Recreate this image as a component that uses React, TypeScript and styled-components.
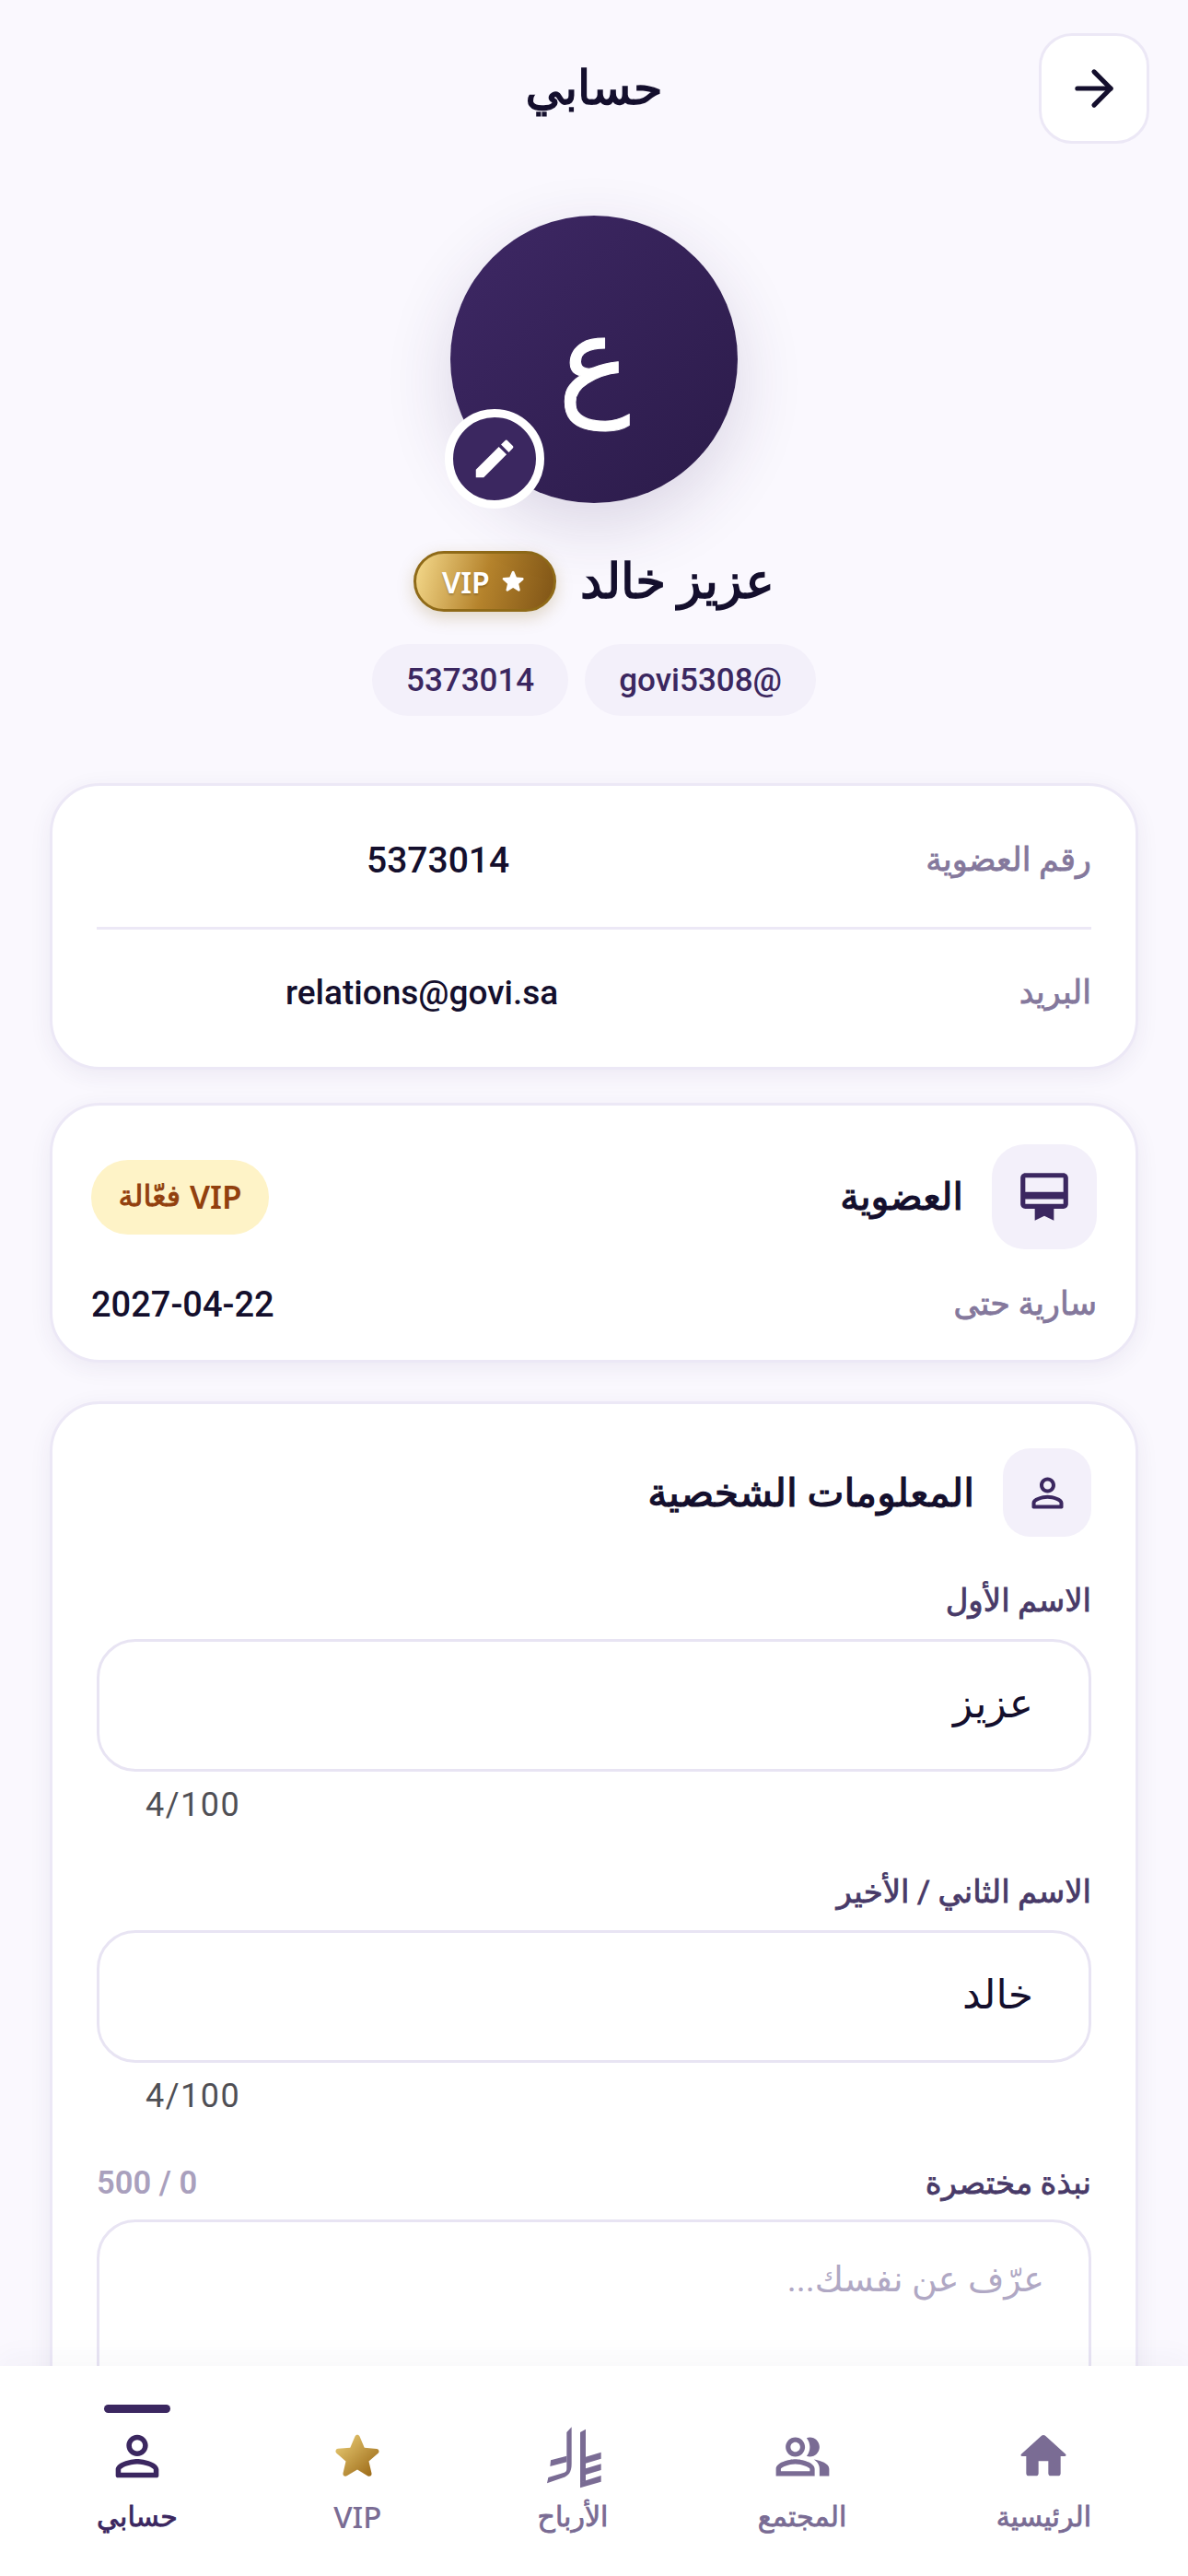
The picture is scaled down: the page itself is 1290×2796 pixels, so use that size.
import React from 'react'
import styled, { createGlobalStyle } from 'styled-components'
import { ArrowRight } from 'lucide-react'

const GlobalStyle = createGlobalStyle`
   html, body {
      margin: 0;
      padding: 0;
      background: #faf8fe;
   }
   body {
      font-family: Roboto, "DejaVu Sans", sans-serif;
      color: #140f2d;
   }
`

const PersonIcon = ({ size, color }: { size: number; color: string }) => (
   <svg width={size} height={size} viewBox="0 0 24 24" fill={color}>
      <path d="M12 5.9a2.1 2.1 0 1 1 0 4.2 2.1 2.1 0 0 1 0-4.2m0 9c2.97 0 6.1 1.46 6.1 2.1v1.1H5.9V17c0-.64 3.13-2.1 6.1-2.1M12 4C9.79 4 8 5.79 8 8s1.79 4 4 4 4-1.79 4-4-1.79-4-4-4zm0 9c-2.67 0-8 1.34-8 4v2.2c0 .44.36.8.8.8h14.4c.44 0 .8-.36.8-.8V17c0-2.66-5.33-4-8-4z" />
   </svg>
)

const App = () => {
   return (
      <Screen dir="rtl">
         <GlobalStyle />
         <Header>
            <BackButton>
               <ArrowRight size={62} strokeWidth={2} color="#140f2d" />
            </BackButton>
            <PageTitle>حسابي</PageTitle>
         </Header>

         <Profile>
            <Avatar>
               ع
               <EditBadge>
                  <svg width="54" height="54" viewBox="0 0 24 24" fill="#fff">
                     <path d="M3 17.25V21h3.75L17.81 9.94l-3.75-3.75L3 17.25zM20.71 7.04a1 1 0 0 0 0-1.41l-2.34-2.34a1 1 0 0 0-1.41 0l-1.83 1.83 3.75 3.75 1.83-1.83z" />
                  </svg>
               </EditBadge>
            </Avatar>
            <NameRow>
               <Name>عزيز خالد</Name>
               <VipPill>
                  <svg width="36" height="36" viewBox="0 0 24 24" fill="#fff">
                     <path d="M12 17.27l4.15 2.51c.76.46 1.69-.22 1.49-1.08l-1.1-4.72 3.67-3.18c.67-.58.31-1.68-.57-1.75l-4.83-.41-1.89-4.46c-.34-.81-1.5-.81-1.84 0L9.19 8.63l-4.83.41c-.88.07-1.24 1.17-.57 1.75l3.67 3.18-1.1 4.72c-.2.86.73 1.54 1.49 1.08l4.15-2.5z" />
                  </svg>
                  VIP
               </VipPill>
            </NameRow>
            <Chips>
               <Chip>@govi5308</Chip>
               <Chip>5373014</Chip>
            </Chips>
         </Profile>

         <Cards>
            <InfoCard>
               <InfoRow $first>
                  <InfoLabel>رقم العضوية</InfoLabel>
                  <InfoValue $inset={293} $size={39}>5373014</InfoValue>
               </InfoRow>
               <InfoRow>
                  <InfoLabel>البريد</InfoLabel>
                  <InfoValue $inset={205} $size={37}>relations@govi.sa</InfoValue>
               </InfoRow>
            </InfoCard>

            <MemberCard>
               <MemberTop>
                  <MemberIcon>
                     <svg width="62" height="62" viewBox="0 0 24 24" fill="#3b2760">
                        <path d="M20 2H4c-1.1 0-2 .9-2 2v11c0 1.1.9 2 2 2h4v5l4-2 4 2v-5h4c1.1 0 2-.9 2-2V4c0-1.1-.9-2-2-2zm0 13H4v-2h16v2zm0-5H4V4h16v6z" />
                     </svg>
                  </MemberIcon>
                  <MemberTitle>العضوية</MemberTitle>
                  <ActiveTag>
                     <TagLatin>VIP</TagLatin> فعّالة
                  </ActiveTag>
               </MemberTop>
               <MemberBottom>
                  <InfoLabel>سارية حتى</InfoLabel>
                  <DateValue>2027-04-22</DateValue>
               </MemberBottom>
            </MemberCard>

            <FormCard>
               <SectionHead>
                  <SectionIcon>
                     <PersonIcon size={51} color="#3b2760" />
                  </SectionIcon>
                  <SectionTitle>المعلومات الشخصية</SectionTitle>
               </SectionHead>

               <Field>
                  <FieldLabel>الاسم الأول</FieldLabel>
                  <TextBox value="عزيز" readOnly />
                  <Counter>4/100</Counter>
               </Field>
               <Field>
                  <FieldLabel>الاسم الثاني / الأخير</FieldLabel>
                  <TextBox value="خالد" readOnly />
                  <Counter>4/100</Counter>
               </Field>
               <Field>
                  <BioHead>
                     <FieldLabel>نبذة مختصرة</FieldLabel>
                     <BioCount>0 / 500</BioCount>
                  </BioHead>
                  <BioBox placeholder="عرّف عن نفسك..." readOnly />
               </Field>
            </FormCard>
         </Cards>

         <BottomNav>
            <NavItem>
               <NavIcon>
                  <svg width="64" height="64" viewBox="0 0 24 24" fill="#7a6c94">
                     <path d="M10 19v-5h4v5c0 .55.45 1 1 1h3c.55 0 1-.45 1-1v-7h1.7c.46 0 .68-.57.33-.87L12.67 3.6c-.38-.34-.96-.34-1.34 0l-8.36 7.53c-.34.3-.13.87.33.87H5v7c0 .55.45 1 1 1h3c.55 0 1-.45 1-1z" />
                  </svg>
               </NavIcon>
               <NavLabel>الرئيسية</NavLabel>
            </NavItem>
            <NavItem>
               <NavIcon>
                  <svg width="63" height="63" viewBox="0 0 24 24" fill="#7a6c94">
                     <path d="M16.67 13.13C18.04 14.06 19 15.32 19 17v3h4v-3c0-2.18-3.57-3.47-6.33-3.87z" />
                     <path d="M15 12c2.21 0 4-1.79 4-4s-1.79-4-4-4c-.47 0-.91.1-1.33.24C14.5 5.27 15 6.58 15 8s-.5 2.73-1.33 3.76c.42.14.86.24 1.33.24z" />
                     <path d="M9 12c2.21 0 4-1.79 4-4s-1.79-4-4-4-4 1.79-4 4 1.79 4 4 4zm0-6c1.1 0 2 .9 2 2s-.9 2-2 2-2-.9-2-2 .9-2 2-2z" />
                     <path d="M9 13c-2.67 0-8 1.34-8 4v3h16v-3c0-2.66-5.33-4-8-4zm6 5H3v-.99C3.2 16.29 6.3 15 9 15s5.8 1.29 6 2v1z" />
                  </svg>
               </NavIcon>
               <NavLabel>المجتمع</NavLabel>
            </NavItem>
            <NavItem>
               <NavIcon>
                  <RiyalIcon width="80" height="80" viewBox="0 0 240 240" fill="#7a6c94">
                     <path d="M100 42 116 25V145C116 172 106 184 88 190L36 208 40 189 92 173C98 171 100 168 100 160zM144 42 162 32V200L144 206z" />
                     <path d="M48 133 100 119V139L46 153zM162 122 212 107V128L162 143zM162 160 212 145V165L162 180zM144 205 212 183V203L144 223z" />
                  </RiyalIcon>
               </NavIcon>
               <NavLabel>الأرباح</NavLabel>
            </NavItem>
            <NavItem>
               <NavIcon>
                  <svg width="66" height="66" viewBox="0 0 24 24">
                     <defs>
                        <linearGradient id="navStar" x1="0" y1="0" x2="1" y2="1">
                           <stop offset="0" stopColor="#eed27a" />
                           <stop offset="1" stopColor="#95610f" />
                        </linearGradient>
                     </defs>
                     <path fill="url(#navStar)" d="M12 17.27l4.15 2.51c.76.46 1.69-.22 1.49-1.08l-1.1-4.72 3.67-3.18c.67-.58.31-1.68-.57-1.75l-4.83-.41-1.89-4.46c-.34-.81-1.5-.81-1.84 0L9.19 8.63l-4.83.41c-.88.07-1.24 1.17-.57 1.75l3.67 3.18-1.1 4.72c-.2.86.73 1.54 1.49 1.08l4.15-2.5z" />
                  </svg>
               </NavIcon>
               <NavLatin>VIP</NavLatin>
            </NavItem>
            <NavItem>
               <ActiveBar />
               <NavIcon>
                  <PersonIcon size={70} color="#3b2760" />
               </NavIcon>
               <NavLabel $active>حسابي</NavLabel>
            </NavItem>
         </BottomNav>
      </Screen>
   )
}

const Screen = styled.div`
   position: relative;
   width: 1290px;
   height: 2796px;
   overflow: hidden;
   background: #faf8fe;
`

const Header = styled.header`
   position: relative;
   display: flex;
   align-items: center;
   justify-content: center;
   height: 120px;
   margin-top: 36px;
`

const BackButton = styled.button`
   position: absolute;
   right: 42px;
   top: 0;
   display: flex;
   align-items: center;
   justify-content: center;
   width: 120px;
   height: 120px;
   padding: 0;
   background: #fff;
   border: 3px solid #ece8f6;
   border-radius: 36px;
`

const PageTitle = styled.h1`
   margin: 0;
   font-size: 51px;
   font-weight: 400;
   -webkit-text-stroke: 1.5px #140f2d;
   line-height: 1.2;
   color: #140f2d;
`

const Profile = styled.section`
   display: flex;
   flex-direction: column;
   align-items: center;
   margin-top: 78px;
`

const Avatar = styled.div`
   position: relative;
   display: flex;
   align-items: center;
   justify-content: center;
   width: 312px;
   height: 312px;
   border-radius: 50%;
   background: linear-gradient(135deg, #3e2865, #2b1b49);
   box-shadow: 0 24px 72px rgba(59, 39, 96, 0.16);
   color: #fff;
   font-size: 132px;
   -webkit-text-stroke: 1px #fff;
`

const EditBadge = styled.div`
   position: absolute;
   left: -6px;
   bottom: -6px;
   display: flex;
   align-items: center;
   justify-content: center;
   box-sizing: border-box;
   width: 108px;
   height: 108px;
   border-radius: 50%;
   border: 9px solid #fff;
   background: #3b2760;
`

const NameRow = styled.div`
   display: flex;
   align-items: center;
   gap: 26px;
   height: 66px;
   margin-top: 52px;
`

const Name = styled.div`
   font-size: 53px;
   -webkit-text-stroke: 1.6px #140f2d;
   line-height: 66px;
   color: #140f2d;
`

const VipPill = styled.div`
   display: flex;
   align-items: center;
   gap: 9px;
   box-sizing: border-box;
   width: 155px;
   height: 66px;
   padding: 0 28px;
   border-radius: 33px;
   border: 3px solid #8f6a18;
   background: linear-gradient(105deg, #f5da8c, #b5832c 50%, #7f5416);
   box-shadow: 0 6px 18px rgba(143, 106, 24, 0.25);
   color: #fff;
   font-family: "Noto Sans", sans-serif;
   font-size: 32px;
   font-weight: 600;
   text-shadow: 0 2px 2px rgba(0, 0, 0, 0.2);
`

const Chips = styled.div`
   display: flex;
   gap: 18px;
   margin-top: 35px;
`

const Chip = styled.div`
   display: flex;
   align-items: center;
   height: 78px;
   padding: 0 37px;
   border-radius: 39px;
   background: #f3f0fa;
   color: #3b2760;
   font-size: 35px;
   font-weight: 500;
`

const Cards = styled.main`
   display: flex;
   flex-direction: column;
   margin: 73px 54px 0;
`

const Card = styled.section`
   box-sizing: border-box;
   background: #fff;
   border: 3px solid #ece8f6;
   border-radius: 54px;
   box-shadow: 0 6px 24px rgba(59, 39, 96, 0.07);
`

const InfoCard = styled(Card)`
   padding: 58px 48px 57px;
`

const MemberCard = styled(Card)`
   margin-top: 36px;
   padding: 42px 42px 37px;
`

const FormCard = styled(Card)`
   margin-top: 42px;
   padding: 48px 48px 0;
`

const InfoRow = styled.div<{ $first?: boolean }>`
   display: flex;
   align-items: center;
   justify-content: space-between;
   padding: ${(p) => (p.$first ? '0 0 49px' : '46px 0 0')};
   border-bottom: ${(p) => (p.$first ? '3px solid #ece8f6' : 'none')};
`

const InfoLabel = styled.div`
   font-size: 35px;
   -webkit-text-stroke: 0.8px #84789c;
   line-height: 46px;
   color: #84789c;
`

const InfoValue = styled.div<{ $inset: number; $size: number }>`
   margin-left: ${(p) => p.$inset}px;
   direction: ltr;
   font-size: ${(p) => p.$size}px;
   font-weight: 500;
   line-height: 46px;
   color: #140f2d;
`

const MemberTop = styled.div`
   display: flex;
   align-items: center;
   gap: 31px;
`

const MemberIcon = styled.div`
   display: flex;
   align-items: center;
   justify-content: center;
   width: 114px;
   height: 114px;
   border-radius: 36px;
   background: #f3f0fa;
`

const MemberTitle = styled.div`
   flex: 1;
   font-size: 41px;
   -webkit-text-stroke: 1.2px #140f2d;
   color: #140f2d;
`

const ActiveTag = styled.div`
   display: flex;
   align-items: center;
   justify-content: center;
   gap: 10px;
   box-sizing: border-box;
   width: 193px;
   height: 81px;
   padding-bottom: 2px;
   border-radius: 40px;
   background: #fef3c7;
   color: #92400e;
   font-size: 32px;
   -webkit-text-stroke: 0.9px #92400e;
`

const TagLatin = styled.span`
   font-family: "Noto Sans", sans-serif;
   font-size: 35px;
   font-weight: 600;
   -webkit-text-stroke: 0;
`

const MemberBottom = styled.div`
   display: flex;
   align-items: center;
   justify-content: space-between;
   margin-top: 37px;
`

const DateValue = styled.div`
   font-size: 38px;
   font-weight: 500;
   line-height: 46px;
   color: #140f2d;
`

const SectionHead = styled.div`
   display: flex;
   align-items: center;
   gap: 31px;
`

const SectionIcon = styled.div`
   display: flex;
   align-items: center;
   justify-content: center;
   width: 96px;
   height: 96px;
   border-radius: 30px;
   background: #f3f0fa;
`

const SectionTitle = styled.h2`
   margin: 0;
   font-size: 42.5px;
   font-weight: 400;
   -webkit-text-stroke: 1.2px #140f2d;
   color: #140f2d;
`

const Field = styled.div`
   margin-top: 45px;

   ${SectionHead} + & {
      margin-top: 42px;
   }
`

const FieldLabel = styled.div`
   font-size: 34px;
   -webkit-text-stroke: 0.8px #483a68;
   line-height: 54px;
   color: #483a68;
`

const TextBox = styled.input`
   display: block;
   box-sizing: border-box;
   width: 100%;
   height: 144px;
   margin-top: 15px;
   padding: 0 60px 4px;
   background: #fff;
   border: 3px solid #e8e4f3;
   border-radius: 42px;
   outline: none;
   color: #140f2d;
   font-family: inherit;
   font-size: 44px;
`

const Counter = styled.div`
   margin-top: 14px;
   padding-left: 53px;
   direction: ltr;
   text-align: left;
   font-size: 36px;
   letter-spacing: 1.5px;
   line-height: 44px;
   color: #4f4f55;
`

const BioHead = styled.div`
   display: flex;
   align-items: center;
   justify-content: space-between;
`

const BioCount = styled.div`
   font-size: 34.5px;
   font-weight: 600;
   color: #a9a0bd;
`

const BioBox = styled.textarea`
   display: block;
   box-sizing: border-box;
   width: 100%;
   height: 300px;
   margin-top: 13px;
   padding: 40px 48px;
   background: #fff;
   border: 3px solid #e8e4f3;
   border-radius: 42px;
   outline: none;
   resize: none;
   font-family: inherit;
   font-size: 38px;

   &::placeholder {
      color: #b0a8c4;
   }
`

const BottomNav = styled.nav`
   position: absolute;
   left: 0;
   right: 0;
   bottom: 0;
   display: flex;
   justify-content: space-between;
   box-sizing: border-box;
   height: 228px;
   padding: 65px 105px 0 105px;
   background: #fff;
   box-shadow: 0 -8px 30px rgba(59, 39, 96, 0.04);
`

const NavItem = styled.div`
   position: relative;
   display: flex;
   flex-direction: column;
   align-items: center;
`

const NavIcon = styled.div`
   display: flex;
   align-items: center;
   justify-content: center;
   height: 66px;
   margin-bottom: 11px;
`

/* drawn larger than its slot, the slanted bars overshoot the row */
const RiyalIcon = styled.svg`
   flex: none;
   margin: -7px -10px;
`

const ActiveBar = styled.span`
   position: absolute;
   top: -23px;
   width: 72px;
   height: 9px;
   border-radius: 5px;
   background: #3b2760;
`

const NavLabel = styled.span<{ $active?: boolean }>`
   font-size: 30px;
   line-height: 44px;
   color: ${(p) => (p.$active ? '#3b2760' : '#7a6c94')};
   -webkit-text-stroke: 0.8px ${(p) => (p.$active ? '#3b2760' : '#7a6c94')};
`

const NavLatin = styled.span`
   font-family: "Noto Sans", sans-serif;
   font-size: 33px;
   font-weight: 500;
   line-height: 44px;
   color: #7a6c94;
`

export default App
